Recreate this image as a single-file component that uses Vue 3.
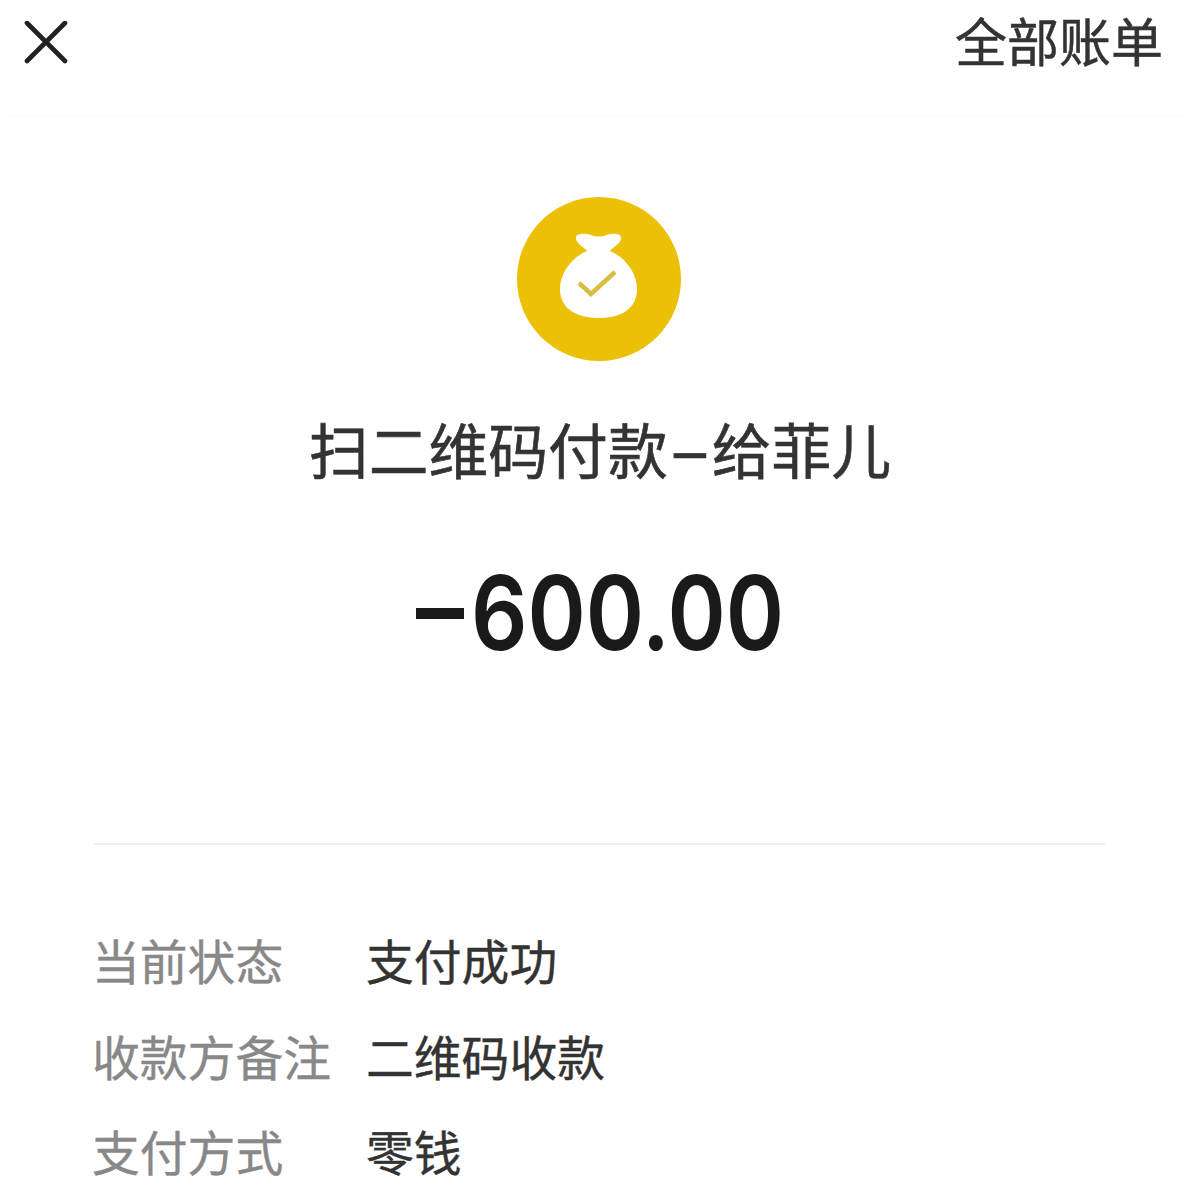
<script setup>
const rows = [
  { label: '当前状态', value: '支付成功' },
  { label: '收款方备注', value: '二维码收款' },
  { label: '支付方式', value: '零钱' },
];
</script>

<template>
  <div class="page">
    <header class="top-bar">
      <svg class="close" viewBox="0 0 44 44" width="44" height="44">
        <path d="M3 2 L41 40 M41 2 L3 40" fill="none" stroke="#222" stroke-width="4.6" stroke-linecap="round" />
      </svg>
      <span class="all-bills">全部账单</span>
    </header>

    <section class="summary">
      <div class="badge">
        <svg viewBox="0 0 164 164" width="164" height="164">
          <path
            d="M59 42 C58 36 68 36 74 38 C80 40 84 40 90 38 C96 36 105 36 104 42 C103 47 96 50 93 54 C108 60 120 76 120 92 C120 112 104 121 82 121 C60 121 43 112 43 92 C43 76 55 60 70 54 C67 50 60 47 59 42 Z"
            fill="#fff"
          />
          <path d="M62 86 L74 97 L98 75" fill="none" stroke="#d9bd3f" stroke-width="4.5" />
        </svg>
      </div>
      <h1 class="title">扫二维码付款<span class="dash">-</span>给菲儿</h1>
      <div class="amount"><span class="minus"></span><span class="digits">600.00</span></div>
    </section>

    <div class="divider"></div>

    <ul class="details">
      <li v-for="row in rows" :key="row.label" class="row">
        <span class="label">{{ row.label }}</span>
        <span class="value">{{ row.value }}</span>
      </li>
    </ul>
  </div>
</template>

<style scoped>
.page {
  width: 1192px;
  height: 1204px;
  overflow: hidden;
  background: #fff;
  font-family: "Liberation Sans", "Noto Sans CJK SC", sans-serif;
}

.top-bar {
  height: 116px;
  box-sizing: border-box;
  padding: 0 29px 30px 24px;
  display: flex;
  align-items: center;
  justify-content: space-between;
  box-shadow: 0 1px 2px rgba(0, 0, 0, 0.02);
}

.all-bills {
  font-size: 52px;
  line-height: 60px;
  color: #333;
  -webkit-text-stroke: 0.5px #333;
  transform: translateY(1px);
}

.summary {
  display: flex;
  flex-direction: column;
  align-items: center;
  padding-top: 81px;
}

.badge {
  width: 164px;
  height: 164px;
  border-radius: 50%;
  background: #ecc006;
  margin-left: 6px;
}

.badge svg {
  display: block;
}

.title {
  margin: 57px 0 0 8px;
  font-size: 59.8px;
  line-height: 72px;
  font-weight: 400;
  color: #333;
  white-space: nowrap;
  -webkit-text-stroke: 0.6px #333;
}

.dash {
  font-family: Roboto, sans-serif;
  display: inline-block;
  width: 44px;
  text-align: center;
  transform: scaleX(2.2);
}

.amount {
  margin: 61px 0 0 6px;
  height: 124px;
  display: flex;
  align-items: center;
  color: #1a1a1a;
}

.minus {
  width: 48px;
  height: 11px;
  margin-right: 7px;
  background: #1a1a1a;
}

.digits {
  font-family: Inter, sans-serif;
  font-size: 103px;
  line-height: 124px;
  font-weight: 600;
  display: inline-block;
  transform: scaleX(0.858);
  transform-origin: left center;
  width: 312px;
}

.divider {
  height: 2px;
  margin: 168px 87px 0 94px;
  background: #eeeeee;
}

.details {
  list-style: none;
  margin: 67px 0 0;
  padding: 0 0 0 92px;
}

.row {
  display: flex;
  height: 95.5px;
  align-items: center;
  font-size: 47.8px;
  -webkit-text-stroke: 0.4px;
}

.label {
  width: 274px;
  color: #888;
}

.value {
  color: #333;
}
</style>
